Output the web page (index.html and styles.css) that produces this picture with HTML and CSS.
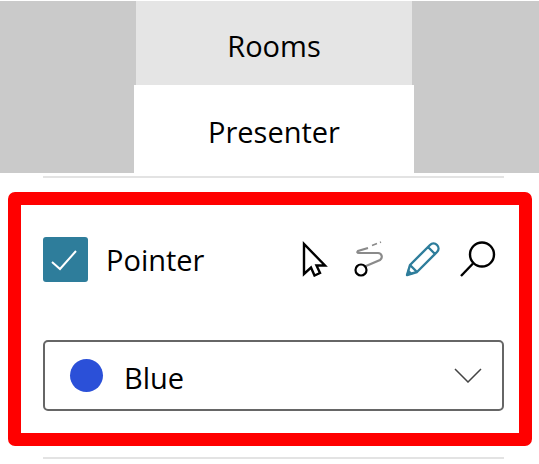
FILE: index.html
```html
<!DOCTYPE html>
<html lang="en">
<head>
  <meta charset="UTF-8" />
  <title>Presenter</title>
  <link rel="stylesheet" href="styles.css">
</head>
<body>
  <header class="tabs">
    <div class="tab tab-rooms">Rooms</div>
    <div class="tab tab-presenter">Presenter</div>
  </header>
  <hr class="rule rule-top">

  <section class="panel">
    <div class="pointer-row">
      <span class="checkbox">
        <svg width="45" height="45" viewBox="0 0 45 45"><path d="M9 25l8 7L33 14" fill="none" stroke="#fff" stroke-width="2"/></svg>
      </span>
      <span class="pointer-label">Pointer</span>
      <div class="tools">
        <!-- arrow -->
        <svg class="tool" width="31" height="36" viewBox="0 0 31 36"><path d="M3 3v30l7-6.500L13.500 34.500 19 32l-3.500-7.500H24z" fill="#fff" stroke="#000" stroke-width="2.400"/></svg>
        <!-- laser trail -->
        <svg class="tool" width="33" height="36" viewBox="0 0 33 36">
          <path d="M14 25l14-6c3-2 2-7-2-7H7c-2 0-2-1-1-2l10-3" fill="none" stroke="#8a8a8a" stroke-width="2.200"/>
          <path d="M20 4.500l5-2M28 1.500l1-.500" fill="none" stroke="#8a8a8a" stroke-width="1.500"/>
          <circle cx="9" cy="29" r="5.500" fill="#fff" stroke="#000" stroke-width="2.200"/>
        </svg>
        <!-- pen -->
        <svg class="tool" width="35" height="36" viewBox="0 0 35 36"><path d="M2 34l3-10L25 4c2-2 5-2 7 0s2 5 0 7L12 31zM5 24l7 7M23 6l7 7" fill="none" stroke="#2e7d9b" stroke-width="2.400" stroke-linejoin="round"/><path d="M1 35l2-7 5 5z" fill="#2e7d9b"/></svg>
        <!-- magnifier -->
        <svg class="tool" width="36" height="36" viewBox="0 0 36 36"><circle cx="22" cy="13.500" r="12" fill="none" stroke="#000" stroke-width="2.400"/><path d="M13 22.500L1 35" fill="none" stroke="#000" stroke-width="2.400"/></svg>
      </div>
    </div>

    <div class="select">
      <span class="dot"></span>
      <span class="select-text">Blue</span>
      <svg class="chevron" width="28" height="15" viewBox="0 0 28 15"><path d="M1 1l13 13L27 1" fill="none" stroke="#444" stroke-width="1.500"/></svg>
    </div>
  </section>

  <hr class="rule rule-bottom">
</body>
</html>
```

FILE: styles.css
```css
html, body { margin: 0; padding: 0; }
body { width: 539px; height: 464px; overflow: hidden; background: #fff; font-family: "Open Sans", "Noto Sans", sans-serif; color: #000; }

.tabs { display: flex; flex-direction: column; align-items: center; height: 172px; margin-top: 1px; padding-left: 9px; background: #cacaca; }
.tab { display: flex; align-items: center; justify-content: center; box-sizing: border-box; font-size: 29px; }
.tab-rooms { width: 276px; height: 84px; padding-top: 5px; background: #e5e5e5; }
.tab-presenter { width: 280px; height: 88px; padding-top: 4px; background: #fff; }

.rule { height: 2px; margin: 0 35px 0 43px; border: 0; background: #e3e3e3; }
.rule-top { margin-top: 3px; }
.rule-bottom { margin-top: 11px; }

.panel { box-sizing: border-box; width: 524px; height: 254px; margin: 14px 0 0 8px; padding: 32px 15px 0 22px; border: 13px solid #f00; border-radius: 7px; background: #fff; }

.pointer-row { display: flex; align-items: center; height: 45px; }
.checkbox { display: block; width: 45px; height: 45px; border-radius: 3px; background: #2e7d9b; }
.checkbox svg { display: block; }
.pointer-label { margin-left: 18px; font-size: 29px; }
.tools { display: flex; align-self: flex-start; gap: 20px; margin: 4px 8px 0 auto; }
.tool { display: block; }

.select { display: flex; align-items: center; box-sizing: border-box; height: 71px; margin-top: 58px; padding: 0 20px 0 25px; border: 2px solid #666; border-radius: 5px; }
.dot { width: 33px; height: 33px; border-radius: 50%; background: #2b50d8; }
.select-text { margin-left: 21px; padding-top: 4px; font-size: 29px; }
.chevron { margin-left: auto; }
```
